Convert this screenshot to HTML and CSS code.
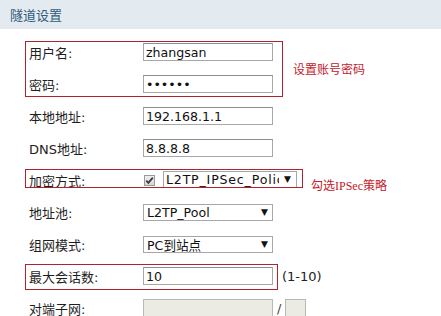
FILE: index.html
```html
<!DOCTYPE html>
<html lang="zh-CN">
<head>
<meta charset="utf-8">
<title>隧道设置</title>
<link rel="stylesheet" href="styles.css">
</head>
<body>
<header class="title">隧道设置</header>
<form class="form">
  <div class="group">
    <div class="rows mark mark-account">
      <div class="row"><label class="label">用户名:</label><input class="text" value="zhangsan"></div>
      <div class="row"><label class="label">密码:</label><input class="text" type="password" value="123456"></div>
    </div>
    <span class="note note-account">设置账号密码</span>
  </div>
  <div class="row"><label class="label">本地地址:</label><input class="text" value="192.168.1.1"></div>
  <div class="row"><label class="label">DNS地址:</label><input class="text" value="8.8.8.8"></div>
  <div class="group">
    <div class="rows mark mark-enc">
      <div class="row">
        <label class="label">加密方式:</label>
        <span class="check"><svg viewBox="0 0 11 11" width="11" height="11"><path d="M2.3 5.6 L4.4 7.8 L8.8 2.6" fill="none" stroke="#3c3c3c" stroke-width="1.8"/></svg></span>
        <span class="select select-wide"><span class="select-value">L2TP_IPSec_Policy</span><span class="arrow">▼</span></span>
      </div>
    </div>
    <span class="note note-enc">勾选IPSec策略</span>
  </div>
  <div class="row"><label class="label">地址池:</label><span class="select"><span class="select-value">L2TP_Pool</span><span class="arrow">▼</span></span></div>
  <div class="row"><label class="label">组网模式:</label><span class="select"><span class="select-value">PC到站点</span><span class="arrow">▼</span></span></div>
  <div class="group">
    <div class="rows mark mark-max">
      <div class="row"><label class="label">最大会话数:</label><input class="text" value="10"></div>
    </div>
    <span class="hint">(1-10)</span>
  </div>
  <div class="row"><label class="label">对端子网:</label><input class="text" disabled value=""><span class="slash">/</span><input class="text text-mask" disabled value=""></div>
</form>
</body>
</html>
```

FILE: styles.css
```css
html, body {
  margin: 0;
  background: #fff;
}
body {
  font-family: "DejaVu Sans", "Noto Sans CJK SC", sans-serif;
  font-size: 13px;
  color: #1e1e1e;
  overflow: hidden;
}
.title {
  height: 29px;
  background: #e4ebf0;
  color: #2e5b7c;
  padding-left: 10px;
  display: flex;
  align-items: center;
  font-family: "Noto Sans CJK SC", sans-serif;
  font-size: 13px;
}
.form {
  padding-top: 7px;
}
.row {
  height: 32px;
  display: flex;
  align-items: center;
  padding-left: 29px;
}
.label {
  width: 114px;
  flex: none;
}
.text {
  width: 130px;
  height: 18px;
  box-sizing: border-box;
  border: 1px solid #a7a7a7;
  border-top-color: #8e8e8e;
  padding: 0 2px;
  margin: 0;
  font-family: "DejaVu Sans", sans-serif;
  font-size: 12.6px;
  color: #111;
  background: #fff;
  outline: none;
}
.text:disabled {
  background: #ebebe4;
  border-color: #b9b9b4;
}
.text-mask {
  width: 21px;
}
.slash {
  margin: 0 4px 0 4px;
  color: #444;
}
.group {
  display: flex;
  align-items: center;
}
.rows {
  position: relative;
}
.mark::before {
  content: "";
  position: absolute;
  left: 25px;
  box-sizing: border-box;
  border: 1px solid #b2222d;
  pointer-events: none;
}
.mark-account::before {
  top: 5px;
  width: 258px;
  height: 56px;
}
.mark-enc::before {
  top: 5px;
  width: 278px;
  height: 19px;
}
.mark-max::before {
  top: 4px;
  width: 253px;
  height: 26px;
}
.note {
  color: #c4202b;
  font-family: "Liberation Serif", "Noto Sans CJK SC", serif;
  font-size: 12px;
}
.note-account {
  margin-left: 20px;
  margin-top: 2px;
}
.note-enc {
  margin-left: 14px;
  margin-top: 9px;
}
.hint {
  margin-left: 9px;
  color: #222;
}
.check {
  width: 11px;
  height: 11px;
  box-sizing: border-box;
  border: 1px solid #9a9a9a;
  background: linear-gradient(#f0f0f0, #d6d6d6);
  margin-left: 1px;
  margin-top: 1px;
  display: flex;
}
.check svg {
  display: block;
  margin: -1px;
}
.select {
  width: 130px;
  height: 17px;
  box-sizing: border-box;
  border: 1px solid #a7a7a7;
  display: flex;
  align-items: center;
  padding: 0 4px 0 3px;
  font-family: "DejaVu Sans", "Noto Sans CJK SC", sans-serif;
  font-size: 12.6px;
  color: #111;
  background: #fff;
}
.select-wide {
  width: 134px;
  flex: none;
  margin-left: 8px;
  margin-top: -2px;
  padding-left: 2px;
  padding-right: 5px;
  letter-spacing: 0.8px;
}
.select-wide .arrow {
  margin-left: 5px;
}
.select-value {
  flex: 1;
  min-width: 0;
  overflow: hidden;
  white-space: nowrap;
}
.arrow {
  flex: none;
  font-size: 9px;
  margin-left: 3px;
  letter-spacing: 0;
  color: #111;
}
```
